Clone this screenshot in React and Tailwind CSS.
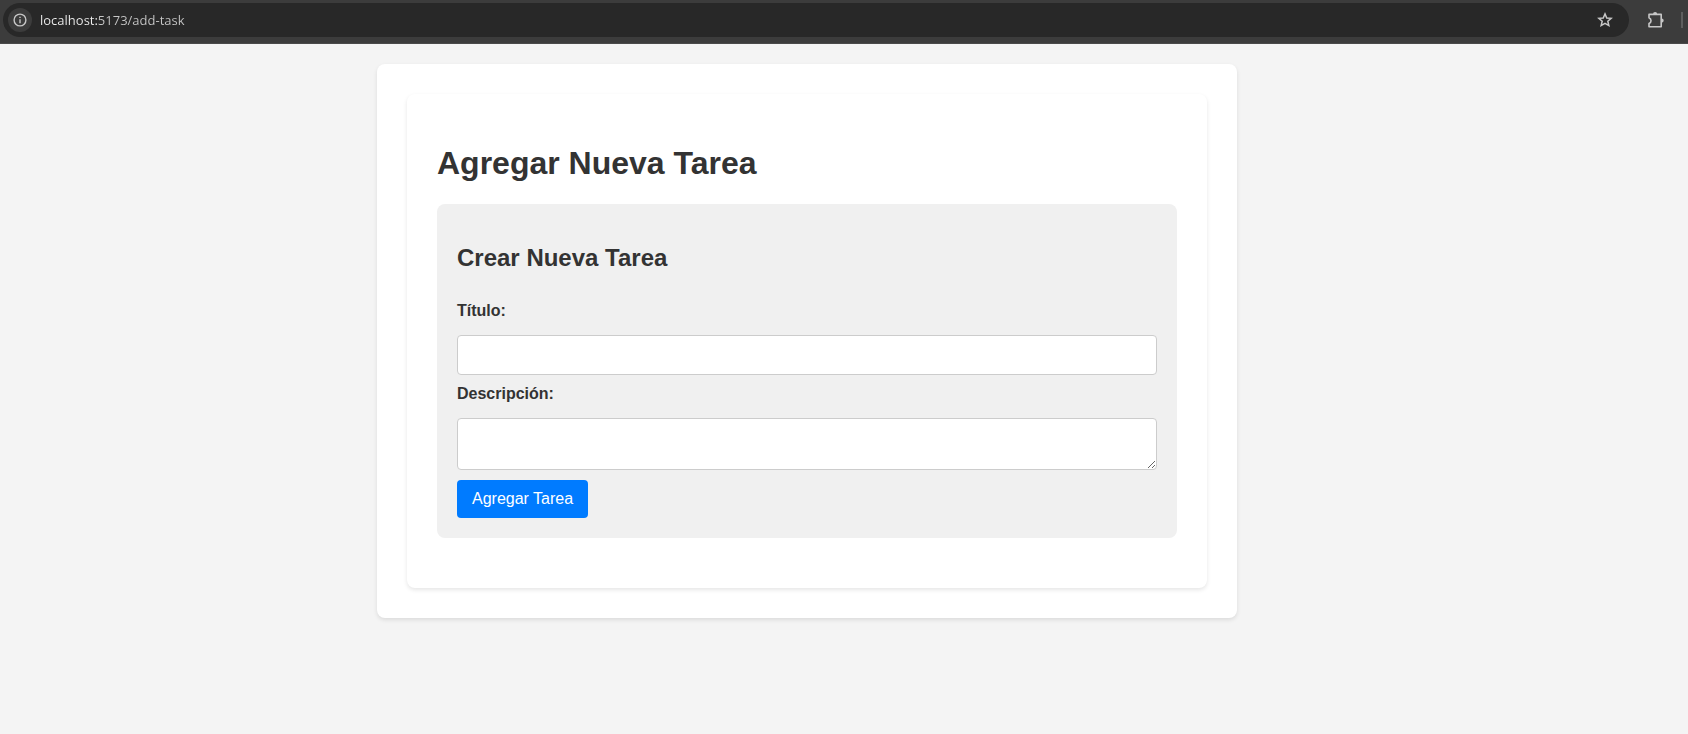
function BrowserBar() {
  return (
    <header className="flex h-11 items-center overflow-hidden border-b border-[#4a4a4a] bg-[#3c3c3c] pb-1 pl-[3px] text-[#c7c7c7]">
      <div className="flex h-[34px] min-w-0 flex-1 items-center rounded-full bg-[#282828] pl-[5px] pr-4">
        <button
          type="button"
          aria-label="Información del sitio"
          className="flex size-6 shrink-0 items-center justify-center rounded-full bg-[#3c3c3c]"
        >
          <svg viewBox="0 0 14 14" className="size-3.5" fill="none" aria-hidden="true">
            <circle cx="7" cy="7" r="5.9" stroke="currentColor" strokeWidth="1.4" />
            <path d="M7 6.3v4" stroke="currentColor" strokeWidth="1.4" />
            <path d="M7 3.7v1.4" stroke="currentColor" strokeWidth="1.4" />
          </svg>
        </button>
        <input
          type="text"
          aria-label="Dirección"
          defaultValue="localhost:5173/add-task"
          className="ml-2 h-6 min-w-0 flex-1 bg-[linear-gradient(to_right,#f0f0f0_57px,#c7c7c7_57px)] bg-clip-text font-['Open_Sans','Noto_Sans',sans-serif] text-[13px] text-transparent caret-white outline-none"
        />
        <button type="button" aria-label="Añadir a marcadores" className="flex size-4 shrink-0 items-center justify-center">
          <svg viewBox="0 0 16 16" className="size-4" fill="none" aria-hidden="true">
            <path
              d="M8 1.9l1.75 4.05 4.4.4-3.33 2.9 1 4.3L8 11.27l-3.82 2.28 1-4.3-3.33-2.9 4.4-.4z"
              stroke="currentColor"
              strokeWidth="1.5"
            />
          </svg>
        </button>
      </div>
      <button type="button" aria-label="Extensiones" className="ml-[18px] flex size-[18px] shrink-0 items-center justify-center">
        <svg viewBox="0 0 18 18" className="size-[18px]" fill="none" aria-hidden="true">
          <path
            d="M2 3.4h12.2v12.4H2v-3.2c2.7-1.2 2.7-4.6 0-5.8V3.4z"
            stroke="currentColor"
            strokeWidth="1.6"
            strokeLinejoin="round"
          />
          <path d="M6 3.2a2.1 2.1 0 0 1 4.2 0zM14.6 7.5a2.1 2.1 0 0 1 0 4.2z" fill="currentColor" />
        </svg>
      </button>
      <span className="ml-4 mr-[5px] h-4 w-0.5 shrink-0 bg-[#5e5e5e]" />
    </header>
  );
}

function TaskForm() {
  return (
    <form className="rounded-lg bg-[#f0f0f0] p-5" onSubmit={(event) => event.preventDefault()}>
      <h2 className="my-5 text-2xl leading-7 font-bold">Crear Nueva Tarea</h2>
      <label htmlFor="titulo" className="mt-[30px] mb-[15px] block text-base leading-[18px] font-bold">
        Título:
      </label>
      <input
        id="titulo"
        type="text"
        className="block h-10 w-full rounded-sm border border-[#ccc] bg-white p-2.5 text-base"
      />
      <label htmlFor="descripcion" className="mt-2.5 mb-[15px] block text-base leading-[18px] font-bold">
        Descripción:
      </label>
      <textarea
        id="descripcion"
        className="block h-[52px] w-full resize rounded-sm border border-[#ccc] bg-white p-2.5 text-sm leading-[15px]"
      />
      <button type="submit" className="mt-2.5 block rounded-sm bg-[#007bff] px-[15px] py-2.5 text-base leading-[18px] text-white">
        Agregar Tarea
      </button>
    </form>
  );
}

export default function App() {
  return (
    <div className="min-h-screen bg-[#f4f4f4] font-['Liberation_Sans',Arial,sans-serif] text-[#333]">
      <BrowserBar />
      <main className="py-5 pr-[74px]">
        <div className="mx-auto max-w-[860px] rounded-lg bg-white p-[30px] shadow-[0_2px_4px_rgba(0,0,0,0.1)]">
          <section className="rounded-lg bg-white px-[30px] pt-[51px] pb-[50px] shadow-[0_2px_4px_rgba(0,0,0,0.1)]">
            <h1 className="mb-[22px] text-[32px] leading-[37px] font-bold">Agregar Nueva Tarea</h1>
            <TaskForm />
          </section>
        </div>
      </main>
    </div>
  );
}
